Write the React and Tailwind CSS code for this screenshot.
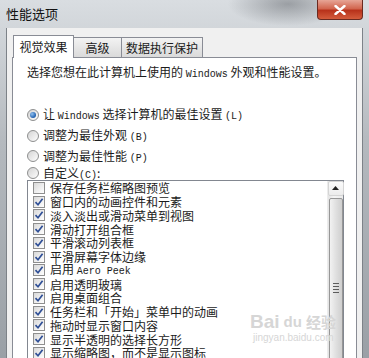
import React from "react";

const items = [
  ["保存任务栏缩略图预览", false],
  ["窗口内的动画控件和元素", true],
  ["淡入淡出或滑动菜单到视图", true],
  ["滑动打开组合框", true],
  ["平滑滚动列表框", true],
  ["平滑屏幕字体边缘", true],
  ["启用 |Aero Peek", true],
  ["启用透明玻璃", true],
  ["启用桌面组合", true],
  ["任务栏和「开始」菜单中的动画", true],
  ["拖动时显示窗口内容", true],
  ["显示半透明的选择长方形", true],
  ["显示缩略图，而不是显示图标", true],
];

// latin runs in SimSun are half width, mono at 10px gets close
const Mixed = ({ text }) => {
  const parts = text.split(/([A-Za-z][A-Za-z ]*[A-Za-z]|\([A-Z]\))/g);
  return (
    <span>
      {parts.map((p, i) =>
        /[A-Za-z]/.test(p) ? (
          <span key={i} className="font-['Liberation_Mono',monospace] text-[10px]">
            {p}
          </span>
        ) : (
          <span key={i}>{p.replace("|", "")}</span>
        )
      )}
    </span>
  );
};

const Radio = ({ checked }) => (
  <div className="w-[12px] h-[12px] rounded-full border border-[#8e8f8f] bg-[linear-gradient(135deg,#d4d4d4,#fdfdfd)] flex items-center justify-center shrink-0">
    {checked && (
      <div className="w-[6px] h-[6px] rounded-full bg-[radial-gradient(circle_at_35%_35%,#8fc0f0,#1f5fae_70%)]" />
    )}
  </div>
);

const Check = ({ checked }) => (
  <div className="w-[12px] h-[12px] border border-[#8f8f8f] bg-[linear-gradient(135deg,#d9d9d9,#ffffff)] flex items-center justify-center shrink-0">
    {checked && (
      <svg width="10" height="10" viewBox="0 0 10 10">
        <path d="M1.5 5.2 L4 7.8 L8.6 1.8" fill="none" stroke="#2f4f96" strokeWidth="1.7" />
      </svg>
    )}
  </div>
);

const App = () => {
  return (
    <div className="relative w-[369px] h-[358px] overflow-hidden bg-[radial-gradient(ellipse_60px_22px_at_78%_4px,rgba(80,84,90,0.45),transparent),linear-gradient(#d9dde1,#b4b9be_40%,#9aa0a6)] font-['Noto_Sans_CJK_SC','Liberation_Sans',sans-serif] text-[12px] text-[#1b1b1b]">
      <div className="h-[28px] flex items-start">
        <div className="pl-[6px] pt-[5px] leading-[18px] text-[13px] text-[#111]">性能选项</div>
        <div className="ml-auto mr-[6px] w-[46px] h-[20px] rounded-b-[4px] border border-t-0 border-[#6a2a20] bg-[linear-gradient(#e7a596,#d2664f_45%,#b8321b_55%,#d45c3c)] flex items-center justify-center">
          <svg width="12" height="10" viewBox="0 0 12 10">
            <path d="M1.5 1 L10.5 9 M10.5 1 L1.5 9" stroke="#fff" strokeWidth="2.4" strokeLinecap="round" />
          </svg>
        </div>
      </div>

      <div className="mx-[6px] h-[330px] bg-[#f0f0f0] pl-[5px] pt-[7px] border-l border-r border-[#7d8288]">
        <div className="flex items-end h-[22px] pl-[1px]">
          <div className="relative z-10 w-[61px] h-[23px] -mb-[1px] border border-b-0 border-[#898c95] bg-white flex items-center justify-center">
            视觉效果
          </div>
          <div className="-ml-[1px] w-[49px] h-[20px] border border-b-0 border-[#898c95] bg-[linear-gradient(#f3f3f3,#e6e6e6_50%,#dadada)] flex items-center justify-center">
            高级
          </div>
          <div className="-ml-[1px] w-[82px] h-[20px] border border-b-0 border-[#898c95] bg-[linear-gradient(#f3f3f3,#e6e6e6_50%,#dadada)] flex items-center justify-center">
            数据执行保护
          </div>
        </div>

        <div className="w-[345px] h-[320px] border border-[#898c95] bg-white pl-[14px] pt-[6px]">
          <div className="leading-[16px] whitespace-nowrap">
            <Mixed text="选择您想在此计算机上使用的 Windows 外观和性能设置。" />
          </div>

          <div className="mt-[21px]">
            {[
              ["让 Windows 选择计算机的最佳设置 (L)", true, "h-[21px]"],
              ["调整为最佳外观 (B)", false, "h-[21px]"],
              ["调整为最佳性能 (P)", false, "h-[20px]"],
              ["自定义(C):", false, "h-[14px]"],
            ].map(([label, on, h]) => (
              <div key={label} className={`${h} flex items-center gap-[4px] whitespace-nowrap`}>
                <Radio checked={on} />
                <Mixed text={label} />
              </div>
            ))}
          </div>

          <div className="w-[317px] h-[200px] border border-[#828790] flex">
            <div className="flex-1 pl-[5px]">
              {items.map(([label, on]) => (
                <div key={label} className="h-[13.75px] flex items-center gap-[5px] whitespace-nowrap leading-[13px]">
                  <Check checked={on} />
                  <Mixed text={label} />
                </div>
              ))}
            </div>
            <div className="w-[16px] bg-[linear-gradient(90deg,#e3e3e3,#f5f5f5_40%,#eaeaea)] border-l border-[#ececec] flex flex-col items-center">
              <div className="w-[16px] h-[17px] border border-[#d5d5d5] rounded-[2px] bg-[linear-gradient(#fbfbfb,#ececec)] flex items-center justify-center">
                <svg width="7" height="4" viewBox="0 0 7 4">
                  <path d="M0 4 L3.5 0 L7 4 Z" fill="#222" />
                </svg>
              </div>
              <div className="mt-[2px] w-[14px] h-[210px] border border-[#979797] rounded-[2px] bg-[linear-gradient(90deg,#f2f2f2,#dcdcdc_60%,#cfcfcf)] flex items-center justify-center">
                <div className="flex flex-col gap-[2px]">
                  <div className="w-[6px] h-[1px] bg-[#5c5c5c]" />
                  <div className="w-[6px] h-[1px] bg-[#5c5c5c]" />
                  <div className="w-[6px] h-[1px] bg-[#5c5c5c]" />
                  <div className="w-[6px] h-[1px] bg-[#5c5c5c]" />
                </div>
              </div>
            </div>
          </div>
        </div>
      </div>

      <div className="absolute left-[250px] top-[312px] text-[#d6d6d6] pointer-events-none">
        <div className="flex items-end gap-[4px] leading-[20px]">
          <span className="font-['Liberation_Sans',sans-serif] font-bold text-[19px]">Bai</span>
          <span className="font-['Liberation_Sans',sans-serif] font-bold text-[15px]">du</span>
          <span className="text-[15px] font-bold">经验</span>
        </div>
        <div className="font-['Liberation_Sans',sans-serif] text-[10px] leading-[12px] pl-[3px]">jingyan.baidu.com</div>
      </div>
    </div>
  );
};

export default App;
